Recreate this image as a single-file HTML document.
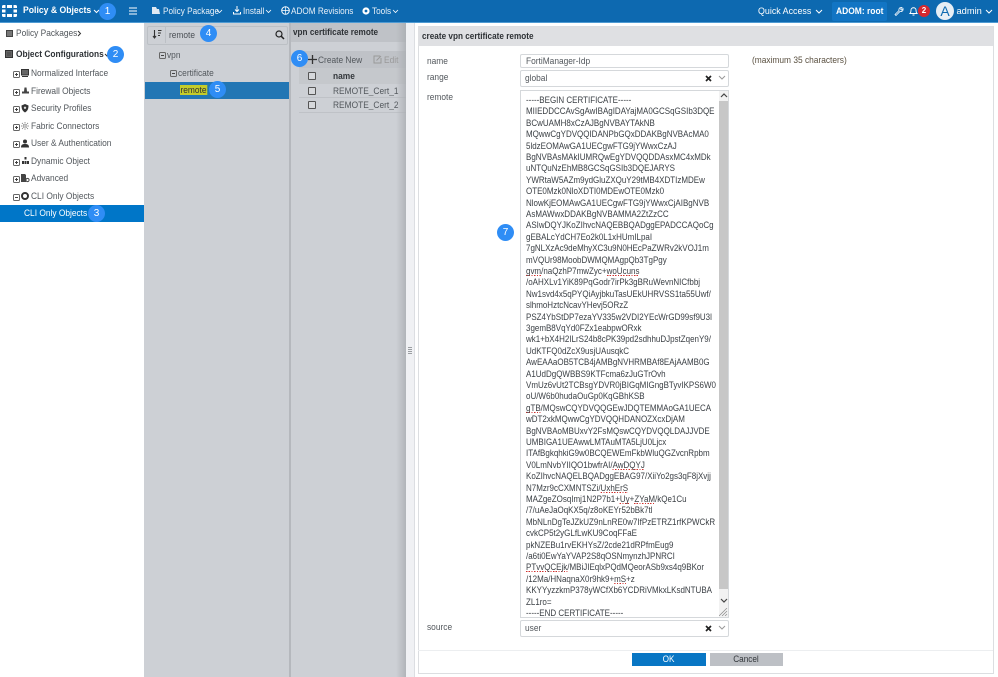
<!DOCTYPE html>
<html><head><meta charset="utf-8"><style>
html,body{margin:0;padding:0;width:998px;height:677px;overflow:hidden;background:#fff;font-family:"Liberation Sans",sans-serif;font-size:9px;color:#3f444a}
#w{position:absolute;left:0;top:0;width:998px;height:677px;overflow:hidden;filter:blur(.25px)}
.a{position:absolute;white-space:nowrap;transform:scaleX(.91);transform-origin:left center}
.b{position:absolute}
.top{color:#e8f0f8;font-size:9px;top:0;line-height:22px}
.badge{position:absolute;width:17px;height:17px;border-radius:50%;background:#2f8df5;color:#fff;font-size:10px;line-height:17px;text-align:center}
.tree{font-size:9.200px;color:#52575c;line-height:12px}
.exp{position:absolute;width:5px;height:5px;border:1px solid #666;border-radius:1.500px;background:#fff}
.exp:after{content:"";position:absolute;left:1px;top:2px;width:3px;height:1px;background:#444}
.p:before{content:"";position:absolute;left:2px;top:1px;width:1px;height:3px;background:#444}
.g{background:none}
.cb{position:absolute;width:6px;height:6px;border:1px solid #555;border-radius:1px;background:#d6d8db}
.cl{position:absolute;left:525.500px;font-size:8.900px;line-height:11px;color:#3a3f44;white-space:nowrap;transform:scaleX(.9);transform-origin:left center}
.sp{background:repeating-linear-gradient(90deg,#d0302c 0 1.500px,transparent 1.500px 3px) 0 100%/100% 1px no-repeat}
.inp{position:absolute;left:520px;width:209px;background:#fff;border:1px solid #d5d8db;border-radius:2px;box-sizing:border-box}
.btn{display:inline-block;transform:scaleX(.91)}
</style></head><body><div id="w">
<div class="b" style="left:0;top:0;width:998px;height:22px;background:#0d69b0"></div>
<div class="b" style="left:0;top:22px;width:998px;height:1px;background:#4f9bd3"></div>
<svg class="b" style="left:2px;top:5px" width="15" height="12" viewBox="0 0 15 12"><g fill="#fff"><path d="M0 3V1.500Q0 0 1.500 0H3.500V3z"/><rect x="5" y="0" width="5" height="3"/><path d="M11.500 3V0h2Q15 0 15 1.500V3z"/><rect x="0" y="4.500" width="3.500" height="3"/><rect x="11.500" y="4.500" width="3.500" height="3"/><path d="M0 9v1.500Q0 12 1.500 12H3.500V9z"/><rect x="5" y="9" width="5" height="3"/><path d="M11.500 9v3h2Q15 12 15 10.500V9z"/></g></svg>
<div class="a top" style="left:23px;font-weight:bold;font-size:9.500px;color:#fff">Policy &amp; Objects</div>
<svg class="b" style="left:93px;top:9px" width="7" height="5"><path d="M1 1l2.500 2.500L6 1" fill="none" stroke="#fff"/></svg>
<div class="badge" style="left:99px;top:3px">1</div>
<svg class="b" style="left:129px;top:7px" width="9" height="8"><path d="M0 1h8M0 4h8M0 7h8" stroke="#fff" stroke-width="1.100"/></svg>
<svg class="b" style="left:152px;top:7px" width="8" height="8"><path d="M0 0h4l1 2h2l1 5H0z" fill="#dfe9f3"/></svg>
<div class="a top" style="left:162.500px">Policy Package</div>
<svg class="b" style="left:216px;top:9px" width="7" height="5"><path d="M1 1l2.500 2.500L6 1" fill="none" stroke="#fff" stroke-width=".8"/></svg>
<svg class="b" style="left:233px;top:6px" width="8" height="9"><path d="M4 0v5M2 3.500L4 5.500 6 3.500M.5 6v2h7V6" fill="none" stroke="#fff"/></svg>
<div class="a top" style="left:243px">Install</div>
<svg class="b" style="left:265px;top:9px" width="7" height="5"><path d="M1 1l2.500 2.500L6 1" fill="none" stroke="#fff" stroke-width=".8"/></svg>
<svg class="b" style="left:281px;top:6px" width="9" height="9"><circle cx="4.500" cy="4.500" r="3.800" fill="none" stroke="#fff"/><path d="M.7 4.500h7.600M4.500.7v7.600" stroke="#fff" stroke-width=".7"/></svg>
<div class="a top" style="left:291px">ADOM Revisions</div>
<svg class="b" style="left:362px;top:7px" width="8" height="8"><circle cx="4" cy="4" r="2.500" fill="none" stroke="#fff" stroke-width="2.200"/></svg>
<div class="a top" style="left:372px">Tools</div>
<svg class="b" style="left:392px;top:9px" width="7" height="5"><path d="M1 1l2.500 2.500L6 1" fill="none" stroke="#fff" stroke-width=".8"/></svg>

<div class="a top" style="left:757.500px;font-size:9.300px;color:#fff;transform:scaleX(.955)">Quick Access</div>
<svg class="b" style="left:815px;top:9px" width="8" height="5"><path d="M1 1l3 3 3-3" fill="none" stroke="#fff"/></svg>
<div class="b" style="left:832px;top:2px;width:55px;height:19px;background:#1275c4;border-radius:2px"></div>
<div class="a top" style="left:836px;font-size:9.300px;color:#fff;font-weight:bold">ADOM: root</div>
<svg class="b" style="left:894px;top:6px" width="10" height="10"><path d="M1 8.500L5 4.500C4.500 2.500 6 1 8 1.500L6.500 3 7.500 4 9 2.500C9.500 4.500 8 6 6 5.500L2 9.500z" fill="none" stroke="#fff" stroke-width=".8"/></svg>
<svg class="b" style="left:909px;top:6px" width="10" height="11"><path d="M1 7.500c1-1 1-2 1-3.500 0-3 5-3 5 0 0 1.500 0 2.500 1 3.500zM3.500 9h2" fill="none" stroke="#fff" stroke-width=".9"/></svg>
<div class="a" style="left:918px;top:5px;width:12px;height:12px;border-radius:50%;background:#d5282f;color:#fff;font-size:8px;font-weight:bold;line-height:12px;text-align:center;transform:none">2</div>
<div class="a" style="left:936px;top:2px;width:18px;height:18px;border-radius:50%;background:#e6eef5;color:#0d69b0;font-size:14px;line-height:18px;text-align:center;transform:none">A</div>
<div class="a top" style="left:956.500px;font-size:9.300px;color:#fff;transform:none">admin</div>
<svg class="b" style="left:985px;top:9px" width="8" height="5"><path d="M1 1l3 3 3-3" fill="none" stroke="#fff"/></svg>

<!-- sidebar -->
<svg class="b" style="left:6px;top:30px" width="7" height="7"><path d="M.5.500h6v6h-6z" fill="#777" stroke="#444"/></svg>
<div class="a tree" style="left:16px;top:27px">Policy Packages</div>
<svg class="b" style="left:77px;top:30px" width="5" height="7"><path d="M1 1l2.500 2.500L1 6" fill="none" stroke="#333"/></svg>
<svg class="b" style="left:5px;top:50px" width="8" height="8"><rect x=".5" y=".5" width="7" height="7" fill="#666" stroke="#333"/><path d="M2 3h4M2 5h4" stroke="#222" stroke-width=".6"/></svg>
<div class="a tree" style="left:16px;top:48px;font-weight:bold;color:#2e3236;font-size:9.200px">Object Configurations</div>
<svg class="b" style="left:104px;top:53px" width="6" height="4"><path d="M1 1l2 2 2-2" fill="none" stroke="#333"/></svg>
<div class="badge" style="left:107px;top:46px">2</div>

<div class="exp p" style="left:13px;top:71px"></div>
<svg class="b" style="left:21px;top:69px" width="8" height="8"><rect x=".5" y=".5" width="7" height="5.500" fill="#666" stroke="#333"/><path d="M1 7.500h6" stroke="#333"/></svg>
<div class="a tree" style="left:31px;top:67px">Normalized Interface</div>
<div class="exp p" style="left:13px;top:89px"></div>
<svg class="b" style="left:22px;top:87px" width="7" height="7"><path d="M2.500 0.500h2l.5 4H7V6.500H0V4.500h2z" fill="#444"/></svg>
<div class="a tree" style="left:31px;top:85px">Firewall Objects</div>
<div class="exp p" style="left:13px;top:106px"></div>
<svg class="b" style="left:21px;top:104px" width="8" height="9"><path d="M4 0l3.500 1.500c0 3.500-1 5.500-3.500 7C1.500 7 .5 5 .5 1.500z" fill="#333"/><circle cx="4" cy="3.800" r="1.200" fill="#ddd"/></svg>
<div class="a tree" style="left:31px;top:102px">Security Profiles</div>
<div class="exp p" style="left:13px;top:124px"></div>
<svg class="b" style="left:21px;top:122px" width="8" height="8"><path d="M1 1l6 6M7 1L1 7M4 0v8M0 4h8" stroke="#888" stroke-width=".9" stroke-dasharray="1.200 .6"/></svg>
<div class="a tree" style="left:31px;top:120px">Fabric Connectors</div>
<div class="exp p" style="left:13px;top:141px"></div>
<svg class="b" style="left:21px;top:139px" width="9" height="9"><circle cx="4" cy="2.500" r="2" fill="#333"/><path d="M0 8.500c0-3 1.500-3.500 4-3.500s4 .5 4 3.500z" fill="#333"/></svg>
<div class="a tree" style="left:31px;top:137px">User &amp; Authentication</div>
<div class="exp p" style="left:13px;top:159px"></div>
<svg class="b" style="left:22px;top:157px" width="7" height="7"><rect x="2.500" y="0" width="2" height="2.500" fill="#333"/><rect x="0" y="4" width="2" height="3" fill="#333"/><rect x="2.500" y="4" width="2" height="3" fill="#333"/><rect x="5" y="4" width="2" height="3" fill="#333"/></svg>
<div class="a tree" style="left:31px;top:155px">Dynamic Object</div>
<div class="exp p" style="left:13px;top:176px"></div>
<svg class="b" style="left:21px;top:174px" width="9" height="9"><path d="M0 0h4l1 1v7H0z" fill="#444"/><circle cx="6.500" cy="6" r="1.600" fill="none" stroke="#444"/></svg>
<div class="a tree" style="left:31px;top:172px">Advanced</div>
<div class="exp" style="left:13px;top:194px"></div><div class="b" style="left:21px;top:192px;width:4px;height:4px;border:2px solid #333;border-radius:50%"></div>
<div class="a tree" style="left:31px;top:190px">CLI Only Objects</div>
<div class="b" style="left:0;top:205px;width:144px;height:17px;background:#0076c8"></div>
<div class="a tree" style="left:24px;top:207px;color:#fff">CLI Only Objects</div>
<div class="badge" style="left:88px;top:205px">3</div>

<!-- tree panel -->
<div class="b" style="left:144px;top:23px;width:146px;height:654px;background:#cdd0d5"></div>
<div class="b" style="left:147px;top:26px;width:139px;height:17px;background:#cdd0d5;border:1px solid #bcc0c5;border-radius:2px"></div>
<div class="b" style="left:165px;top:27px;width:1px;height:16px;background:#bcc0c5"></div>
<svg class="b" style="left:152px;top:29px" width="10" height="11"><path d="M2.500 1v8M1 7l1.500 2L4 7M6 1.500h3.500M6 4h3M6 6.500h2" fill="none" stroke="#333" stroke-width="1.100"/></svg>
<div class="a tree" style="left:169px;top:29px;color:#4a4f54">remote</div>
<div class="badge" style="left:200px;top:25px">4</div>
<svg class="b" style="left:275px;top:30px" width="10" height="10"><circle cx="4" cy="4" r="3" fill="none" stroke="#222" stroke-width="1.200"/><path d="M6.300 6.300L9 9" stroke="#222" stroke-width="1.500"/></svg>
<div class="exp g" style="left:159px;top:52px"></div><div class="a tree" style="left:167px;top:49px">vpn</div>
<div class="exp g" style="left:170px;top:70px"></div><div class="a tree" style="left:178px;top:67px">certificate</div>
<div class="b" style="left:145px;top:82px;width:144px;height:17px;background:#2276b4"></div>
<div class="a" style="left:180px;top:85px;background:#c4cc2a;color:#2e3236;line-height:10px;padding:0 .500px;font-size:9.200px">remote</div>
<div class="badge" style="left:209px;top:81px">5</div>
<div class="b" style="left:289px;top:23px;width:2px;height:654px;background:#b5b8bd"></div>

<!-- main panel -->
<div class="b" style="left:291px;top:23px;width:115px;height:654px;background:#cdd0d5"></div>
<div class="b" style="left:291px;top:23px;width:115px;height:19px;background:#bfc2c7"></div>
<div class="a" style="left:293px;top:26px;font-weight:bold;font-size:9px;color:#2e3236;line-height:12px">vpn certificate remote</div>
<div class="b" style="left:299px;top:51px;width:107px;height:17px;background:#bfc2c7"></div>
<div class="b" style="left:299px;top:68px;width:107px;height:16px;background:#c5c8cc"></div>
<div class="badge" style="left:291px;top:50px">6</div>
<svg class="b" style="left:308px;top:55px" width="9" height="9"><path d="M4.500 0v9M0 4.500h9" stroke="#333" stroke-width="1.300"/></svg>
<div class="a tree" style="left:318px;top:54px">Create New</div>
<svg class="b" style="left:373px;top:55px" width="9" height="9"><path d="M7 1H1v7h7V3M3.500 5.500L8 1" fill="none" stroke="#999"/></svg>
<div class="a tree" style="left:384px;top:54px;color:#999">Edit</div>
<div class="cb" style="left:308px;top:72px"></div>
<div class="a tree" style="left:333px;top:70px;font-weight:bold;color:#33373b">name</div>
<div class="cb" style="left:308px;top:87px"></div>
<div class="a tree" style="left:333px;top:85px">REMOTE_Cert_1</div>
<div class="b" style="left:299px;top:97px;width:107px;height:1px;background:#bfc2c7"></div>
<div class="cb" style="left:308px;top:101px"></div>
<div class="a tree" style="left:333px;top:99px">REMOTE_Cert_2</div>
<div class="b" style="left:299px;top:112px;width:107px;height:1px;background:#bfc2c7"></div>

<!-- slide gutter -->
<div class="b" style="left:396px;top:23px;width:10px;height:654px;background:linear-gradient(90deg,rgba(170,173,178,0),rgba(170,173,178,.8))"></div>
<div class="b" style="left:406px;top:23px;width:9px;height:654px;background:#f0f1f4"></div>
<div class="b" style="left:408px;top:347px;width:4px;height:8px;background:repeating-linear-gradient(#9a9da1 0 1px,#f0f1f4 1px 2px)"></div>
<div class="b" style="left:414px;top:23px;width:1px;height:654px;background:#dcdee2"></div>

<!-- dialog -->
<div class="b" style="left:418px;top:26px;width:576px;height:648px;border:1px solid #dcdee1;box-sizing:border-box"></div>
<div class="b" style="left:418px;top:27px;width:575px;height:19px;background:#dfe0e3"></div>
<div class="a" style="left:421.500px;top:30px;font-weight:bold;font-size:9px;color:#2e3236;line-height:12px">create vpn certificate remote</div>
<div class="a tree" style="left:427px;top:55px">name</div>
<div class="a tree" style="left:427px;top:71px">range</div>
<div class="a tree" style="left:427px;top:91px">remote</div>
<div class="a tree" style="left:427px;top:621px">source</div>
<div class="a tree" style="left:752px;top:54px;color:#5a5040">(maximum 35 characters)</div>
<div class="inp" style="top:54px;height:14px"></div>
<div class="a tree" style="left:525.500px;top:55px">FortiManager-Idp</div>
<div class="inp" style="top:70px;height:17px"></div>
<div class="a tree" style="left:525px;top:72px">global</div>
<svg class="b" style="left:705px;top:75px" width="7" height="7"><path d="M1 1l5 5M6 1L1 6" stroke="#222" stroke-width="1.700"/></svg>
<svg class="b" style="left:718px;top:75px" width="8" height="5"><path d="M1 1l3 3 3-3" fill="none" stroke="#999"/></svg>
<div class="inp" style="top:90px;height:528px;border-radius:0"></div>
<div class="b" style="left:719px;top:91px;width:9px;height:526px;background:#f2f2f2"></div>
<div class="b" style="left:719px;top:101px;width:9px;height:488px;background:#c7c7c7"></div>
<svg class="b" style="left:720px;top:93px" width="8" height="6"><path d="M1 4l3-3 3 3" fill="none" stroke="#444" stroke-width="1.200"/></svg>
<svg class="b" style="left:720px;top:598px" width="8" height="6"><path d="M1 1l3 3 3-3" fill="none" stroke="#444" stroke-width="1.200"/></svg>
<svg class="b" style="left:719px;top:608px" width="9" height="8"><path d="M0 8L8 0M3 8l5-5M6 8l2-2" stroke="#888" stroke-width=".7"/></svg>
<div class="inp" style="top:620px;height:17px"></div>
<div class="a tree" style="left:525px;top:622px">user</div>
<svg class="b" style="left:705px;top:625px" width="7" height="7"><path d="M1 1l5 5M6 1L1 6" stroke="#222" stroke-width="1.700"/></svg>
<svg class="b" style="left:718px;top:625px" width="8" height="5"><path d="M1 1l3 3 3-3" fill="none" stroke="#999"/></svg>
<div class="b" style="left:418px;top:650px;width:575px;height:1px;background:#eceef0"></div>
<div class="b" style="left:632px;top:653px;width:74px;height:13px;background:#0876c4;color:#fff;text-align:center;line-height:13px"><span class="btn">OK</span></div>
<div class="b" style="left:710px;top:653px;width:73px;height:13px;background:#bdc0c5;color:#33373b;text-align:center;line-height:13px"><span class="btn">Cancel</span></div>

<div class="cl" style="top:95px">-----BEGIN CERTIFICATE-----</div>
<div class="cl" style="top:106.400px">MIIEDDCCAvSgAwIBAgIDAYajMA0GCSqGSIb3DQE</div>
<div class="cl" style="top:117.800px">BCwUAMH8xCzAJBgNVBAYTAkNB</div>
<div class="cl" style="top:129.200px">MQwwCgYDVQQIDANPbGQxDDAKBgNVBAcMA0</div>
<div class="cl" style="top:140.600px">5ldzEOMAwGA1UECgwFTG9jYWwxCzAJ</div>
<div class="cl" style="top:152px">BgNVBAsMAkIUMRQwEgYDVQQDDAsxMC4xMDk</div>
<div class="cl" style="top:163.400px">uNTQuNzEhMB8GCSqGSIb3DQEJARYS</div>
<div class="cl" style="top:174.800px">YWRtaW5AZm9ydGluZXQuY29tMB4XDTIzMDEw</div>
<div class="cl" style="top:186.200px">OTE0Mzk0NloXDTI0MDEwOTE0Mzk0</div>
<div class="cl" style="top:197.600px">NlowKjEOMAwGA1UECgwFTG9jYWwxCjAIBgNVB</div>
<div class="cl" style="top:209px">AsMAWwxDDAKBgNVBAMMA2ZtZzCC</div>
<div class="cl" style="top:220.400px">ASIwDQYJKoZIhvcNAQEBBQADggEPADCCAQoCg</div>
<div class="cl" style="top:231.800px">gEBALcYdCH7Eo2k0L1xHUmILpaI</div>
<div class="cl" style="top:243.200px">7gNLXzAc9deMhyXC3u9N0HEcPaZWRv2kVOJ1m</div>
<div class="cl" style="top:254.600px">mVQUr98MoobDWMQMAgpQb3TgPgy</div>
<div class="cl" style="top:266px"><span class="sp">gvm</span>/naQzhP7mwZyc+<span class="sp">woUcuns</span></div>
<div class="cl" style="top:277.400px">/oAHXLv1YiK89PqGodr7irPk3gBRuWevnNICfbbj</div>
<div class="cl" style="top:288.800px">Nw1svd4x5qPYQiAyjbkuTasUEkUHRVSS1ta55Uwf/</div>
<div class="cl" style="top:300.200px">slhmoHztcNcavYHevj5ORzZ</div>
<div class="cl" style="top:311.600px">PSZ4YbStDP7ezaYV335w2VDI2YEcWrGD99sf9U3l</div>
<div class="cl" style="top:323px">3gemB8VqYd0FZx1eabpwORxk</div>
<div class="cl" style="top:334.400px">wk1+bX4H2ILrS24b8cPK39pd2sdhhuDJpstZqenY9/</div>
<div class="cl" style="top:345.800px">UdKTFQ0dZcX9usjUAusqkC</div>
<div class="cl" style="top:357.200px">AwEAAaOB5TCB4jAMBgNVHRMBAf8EAjAAMB0G</div>
<div class="cl" style="top:368.600px">A1UdDgQWBBS9KTFcma6zJuGTrOvh</div>
<div class="cl" style="top:380px">VmUz6vUt2TCBsgYDVR0jBIGqMIGngBTyvIKPS6W0</div>
<div class="cl" style="top:391.400px">oU/W6b0hudaOuGp0KqGBhKSB</div>
<div class="cl" style="top:402.800px"><span class="sp">gTB</span>/MQswCQYDVQQGEwJDQTEMMAoGA1UECA</div>
<div class="cl" style="top:414.200px">wDT2xkMQwwCgYDVQQHDANOZXcxDjAM</div>
<div class="cl" style="top:425.600px">BgNVBAoMBUxvY2FsMQswCQYDVQQLDAJJVDE</div>
<div class="cl" style="top:437px">UMBIGA1UEAwwLMTAuMTA5LjU0Ljcx</div>
<div class="cl" style="top:448.400px">ITAfBgkqhkiG9w0BCQEWEmFkbWluQGZvcnRpbm</div>
<div class="cl" style="top:459.800px">V0LmNvbYIIQO1bwfrAI/<span class="sp">AwDQYJ</span></div>
<div class="cl" style="top:471.200px">KoZIhvcNAQELBQADggEBAG97/XiiYo2gs3qF8jXvjj</div>
<div class="cl" style="top:482.600px">N7Mzr9cCXMNTSZi/<span class="sp">UxhErS</span></div>
<div class="cl" style="top:494px">MAZgeZOsqImj1N2P7b1+<span class="sp">Uy</span>+<span class="sp">ZYaM</span>/kQe1Cu</div>
<div class="cl" style="top:505.400px">/7/uAeJaOqKX5q/z8oKEYr52bBk7tl</div>
<div class="cl" style="top:516.800px">MbNLnDgTeJZkUZ9nLnRE0w7IfPzETRZ1rfKPWCkR</div>
<div class="cl" style="top:528.200px">cvkCP5t2yGLfLwKU9CoqFFaE</div>
<div class="cl" style="top:539.600px">pkNZEBu1rvEKHYsZ/2cde21dRPfmEug9</div>
<div class="cl" style="top:551px">/a6ti0EwYaYVAP2S8qOSNmynzhJPNRCI</div>
<div class="cl" style="top:562.400px"><span class="sp">PTvvQCEjk</span>/MBiJIEqlxPQdMQeorASb9xs4q9BKor</div>
<div class="cl" style="top:573.800px">/12Ma/HNaqnaX0r9hk9+<span class="sp">mS</span>+z</div>
<div class="cl" style="top:585.200px">KKYYyzzkmP378yWCfXb6YCDRiVMkxLKsdNTUBA</div>
<div class="cl" style="top:596.600px">ZL1ro=</div>
<div class="cl" style="top:608px">-----END CERTIFICATE-----</div>
<div class="badge" style="left:497px;top:224px">7</div>
</div></body></html>
